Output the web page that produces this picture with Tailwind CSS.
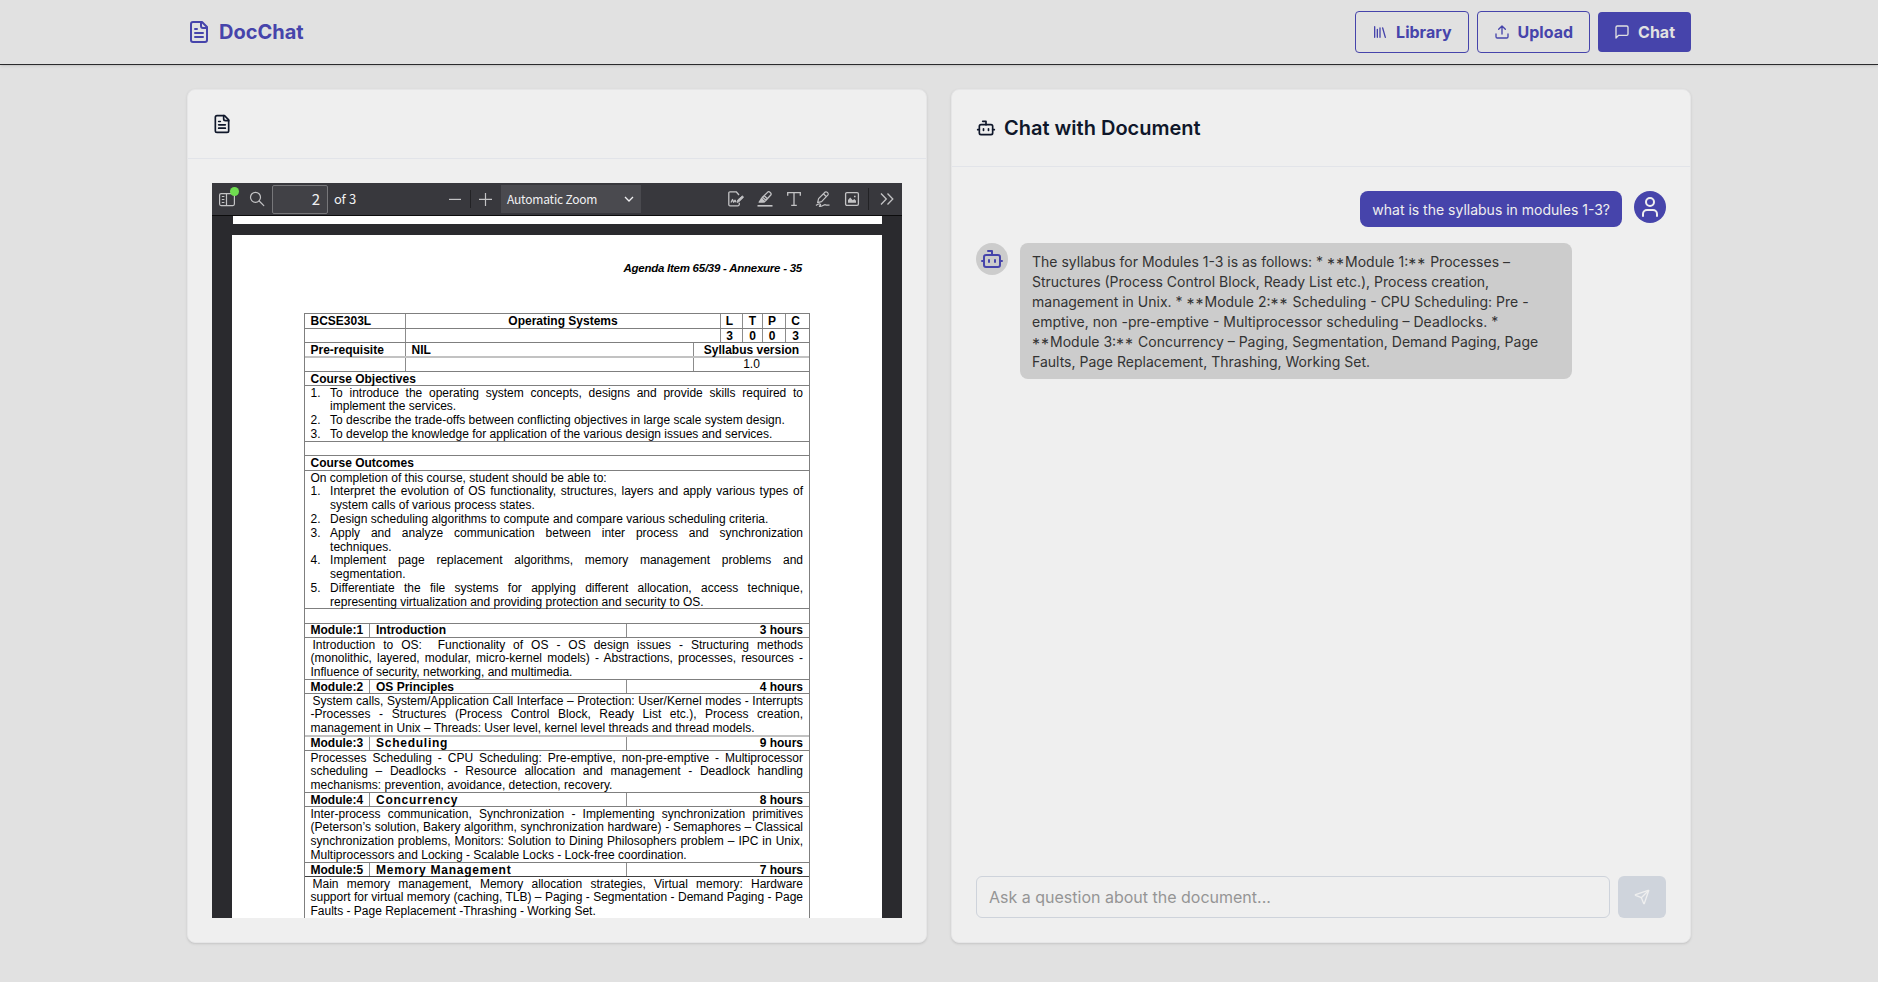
<!DOCTYPE html>
<html lang="en">
<head>
<meta charset="utf-8">
<title>DocChat</title>
<script src="https://cdn.jsdelivr.net/npm/@tailwindcss/browser@4"></script>
</head>
<body class="h-[982px] overflow-hidden bg-[#e1e1e1] font-['Inter',sans-serif] text-[#0f172a]">
<svg class="hidden">
  <symbol id="file" viewBox="0 0 24 24"><path d="M15 2H6a2 2 0 0 0-2 2v16a2 2 0 0 0 2 2h12a2 2 0 0 0 2-2V7Z"/><path d="M14 2v4a2 2 0 0 0 2 2h4"/><path d="M10 9H8M16 13H8M16 17H8"/></symbol>
  <symbol id="bot" viewBox="0 0 24 24"><path d="M12 8V4H8"/><rect width="16" height="12" x="4" y="8" rx="2"/><path d="M2 14h2M20 14h2M15 13v2M9 13v2"/></symbol>
</svg>

<header class="h-[65px] border-b border-[#2a2a2c] shadow-sm">
  <div class="mx-auto flex h-16 w-[1504px] items-center justify-between">
    <div class="flex items-center gap-2 text-[#4644ab]">
      <svg class="size-6 fill-none stroke-current stroke-2 [stroke-linecap:round] [stroke-linejoin:round]"><use href="#file"/></svg>
      <span class="text-xl font-bold">DocChat</span>
    </div>
    <nav class="flex items-center gap-2 font-bold">
      <button class="flex h-[42px] items-center gap-2 rounded border border-[#4644ab] px-4 text-[#4644ab]">
        <svg class="size-4 fill-none stroke-current stroke-2 [stroke-linecap:round] [stroke-linejoin:round]" viewBox="0 0 24 24"><path d="m16 6 4 14M12 6v14M8 8v12M4 4v16"/></svg>Library</button>
      <button class="flex h-[42px] items-center gap-2 rounded border border-[#4644ab] px-4 text-[#4644ab]">
        <svg class="size-4 fill-none stroke-current stroke-2 [stroke-linecap:round] [stroke-linejoin:round]" viewBox="0 0 24 24"><path d="M21 15v4a2 2 0 0 1-2 2H5a2 2 0 0 1-2-2v-4M17 8l-5-5-5 5M12 3v12"/></svg>Upload</button>
      <button class="flex h-10 items-center gap-2 rounded bg-[#4644ab] px-4 text-[#e1e1e1]">
        <svg class="size-4 fill-none stroke-current stroke-2 [stroke-linecap:round] [stroke-linejoin:round]" viewBox="0 0 24 24"><path d="M21 15a2 2 0 0 1-2 2H7l-4 4V5a2 2 0 0 1 2-2h14a2 2 0 0 1 2 2z"/></svg>Chat</button>
    </nav>
  </div>
</header>

<main class="mx-auto mt-6 grid h-[854px] w-[1504px] grid-cols-2 gap-6">
  <section class="flex flex-col rounded-lg border border-[#e6e6e7] bg-[#efefef] shadow-sm">
    <div class="border-b border-[#e2e4e9] p-6">
      <svg class="block size-5 fill-none stroke-current stroke-2 [stroke-linecap:round] [stroke-linejoin:round]"><use href="#file"/></svg>
    </div>
    <div class="m-6 flex h-[735px] flex-col overflow-hidden bg-[#2a2a2e]">
      <!-- viewer toolbar -->
      <div class="flex h-[33px] shrink-0 items-center border-b border-[#0c0c0d] bg-[#38383d] font-['Noto_Sans_CJK_SC',sans-serif] text-[13px] text-[#f0f0f2]">
        <div class="relative ml-[7px] h-8 w-4 shrink-0">
          <svg class="mt-2 block size-4 fill-none stroke-[#c3c3c5] stroke-[1.2]" viewBox="0 0 16 16"><rect x=".6" y="2.6" width="14.8" height="12" rx="1.5"/><path d="M7.5 2.6v12M2.8 5.5h2.6M2.8 8.5h2.6M2.8 11.5h2.6"/></svg>
          <span class="absolute top-1 left-[11px] size-[9px] rounded-full bg-[#6fdc50]"></span>
        </div>
        <svg class="ml-[14px] size-4 shrink-0 fill-none stroke-[#c3c3c5] stroke-[1.2] [stroke-linecap:round]" viewBox="0 0 16 16"><circle cx="6.5" cy="6.3" r="5"/><path d="m10.2 10 4.6 4.6"/></svg>
        <div class="ml-[7px] flex h-[29px] w-14 shrink-0 items-center justify-end rounded-[2px] border border-[#77777a] bg-[#414146] pr-[7px] text-[15px]">2</div>
        <span class="ml-[6px] w-[115px] shrink-0 tracking-[-0.3px] [word-spacing:0.8px]">of 3</span>
        <svg class="h-4 w-3 shrink-0 stroke-[#c3c3c5] stroke-[1.2]" viewBox="0 0 12 16"><path d="M0 8.4h12"/></svg>
        <span class="ml-[9px] h-[18px] w-px shrink-0 bg-[#222225]"></span>
        <svg class="ml-2 h-4 w-[13px] shrink-0 stroke-[#c3c3c5] stroke-[1.2]" viewBox="0 0 13 16"><path d="M0 8.4h13M6.5 2v13"/></svg>
        <div class="ml-[9px] flex h-7 w-[140px] shrink-0 items-center justify-between bg-[#4a4a4f] pr-[7px] pl-[6px] text-[12px] tracking-[-0.2px]"><span>Automatic Zoom</span>
          <svg class="h-2 w-2.5 fill-none stroke-[#f0f0f2] stroke-[1.3]" viewBox="0 0 10 8"><path d="m1 2 4 4 4-4"/></svg>
        </div>
        <div class="ml-[87px] flex shrink-0 items-center gap-[13px]">
          <svg class="size-4 fill-none stroke-[#c3c3c5] stroke-[1.3] [stroke-linejoin:round]" viewBox="0 0 16 16"><path d="M11 4 8.2.8H2A1.2 1.2 0 0 0 .8 2v11.5A1.2 1.2 0 0 0 2 14.8h8a1.5 1.5 0 0 0 1.3-1.3v-1.8M3 11.5l1.5-3 1.2 2.7 1.4-2 .8 2"/><path class="fill-[#c3c3c5] stroke-[.8]" d="m9 11.5.6-2.4 4.8-4.3 1.2 1.5-4.7 4.5z"/></svg>
          <svg class="size-4 fill-none stroke-[#c3c3c5] stroke-[1.3] [stroke-linejoin:round]" viewBox="0 0 16 16"><path d="M5.5 6.2 11 .9c1.2-.8 3.7 1.2 3 2.8L9 9.3zM5.5 6.2 4.4 7.8l3 3L9 9.3M7.3 4.7l3.1 3"/><path class="fill-[#c3c3c5]" d="m4.4 7.8-2.2 3.3h4L7.4 10.4z"/><path class="stroke-[1.6]" d="M.5 14.8h15"/></svg>
          <svg class="size-4 fill-none stroke-[#c3c3c5] stroke-[1.3]" viewBox="0 0 16 16"><path d="M1.7 4.8V1.6h12.6v3.2M8 1.6v12.8M5.2 14.4h5.6"/></svg>
          <svg class="size-4 fill-none stroke-[#c3c3c5] stroke-[1.2] [stroke-linejoin:round]" viewBox="0 0 16 16"><path d="m3.6 7.7 6.6-6.7c1.3-.8 3.6 1 2.8 2.8L6.6 10.6l-4 1zM8.4 2.8l3 2.9"/><path d="M1 14.5c2-2 4-1.7 4.5-1s-1.8 1.7-.8 1.9c2 .2 4-1.7 5.5-1.7 1 .5 2.4.7 4.4.3"/></svg>
          <svg class="size-4 fill-none stroke-[#c3c3c5] stroke-[1.3]" viewBox="0 0 16 16"><rect x="1.6" y="1.6" width="12.8" height="12.8" rx="1.3"/><path class="fill-[#c3c3c5] stroke-none" d="M4 11.8V9l2.2-2.5 2.5 2.7L10.3 8 12 9.8v2zM10 4.7h1.6v1.6H10z"/></svg>
        </div>
        <span class="ml-[8px] h-[22px] w-px shrink-0 bg-[#222225]"></span>
        <svg class="ml-[11px] h-3 w-[14px] shrink-0 fill-none stroke-[#c3c3c5] stroke-[1.3]" viewBox="0 0 14 12"><path d="m1 .5 5.3 5.5L1 11.5M7.5.5 12.8 6l-5.3 5.5"/></svg>
      </div>
      <div class="ml-[21px] h-2 w-[649px] shrink-0 bg-white"></div>
      <!-- document page -->
      <div class="mt-[11px] ml-5 h-[683px] w-[650px] shrink-0 overflow-hidden bg-white font-['Liberation_Sans',Arial,sans-serif] text-[12px] leading-[13.8px] whitespace-nowrap text-black">
        <p class="mt-[27px] mr-[80px] text-right text-[11.5px] font-bold tracking-[-0.25px] italic">Agenda Item 65/39 - Annexure - 35</p>
        <div class="mt-[37px] ml-[72px] w-[506px] border-x border-[#7f7f7f] [&>div]:border-t [&>div]:border-[#7f7f7f]">
          <div class="flex h-[15px] leading-[15px] font-bold [&>*+*]:border-l [&>*+*]:border-[#8c8c8c]"><span class="w-[100px] pl-[5.5px]">BCSE303L</span><span class="w-[315px] text-center">Operating Systems</span><span class="w-[22px] pr-1 text-center">L</span><span class="w-5 text-center">T</span><span class="w-[23px] pr-1 text-center">P</span><span class="flex-1 pr-1 text-center">C</span></div>
          <div class="flex h-[14px] leading-[15px] font-bold [&>*+*]:border-l [&>*+*]:border-[#8c8c8c]"><span class="w-[100px]"></span><span class="w-[315px]"></span><span class="w-[22px] pr-1 text-center">3</span><span class="w-5 text-center">0</span><span class="w-[23px] pr-1 text-center">0</span><span class="flex-1 pr-1 text-center">3</span></div>
          <div class="flex h-[14px] leading-[15px] font-bold [&>*+*]:border-l [&>*+*]:border-[#8c8c8c]"><span class="w-[100px] pl-[5.5px]">Pre-requisite</span><span class="w-[288px] pl-[5.5px]">NIL</span><span class="flex-1 text-center">Syllabus version</span></div>
          <div class="flex h-[15px] !border-t-2 !border-[#c2c2c2] leading-[12.6px] [&>*+*]:border-l [&>*+*]:border-[#8c8c8c]"><span class="w-[100px]"></span><span class="w-[288px]"></span><span class="flex-1 text-center">1.0</span></div>
          <div class="h-[14px] pl-[5.5px] leading-[15px] font-bold">Course Objectives</div>
          <div class="h-[56px] pt-[0.9px] pr-[6px] pl-[5.5px] [&>p]:flex [&>p>b]:w-[19.6px] [&>p>b]:font-normal [&>p>span]:flex-1">
            <p><b>1.</b><span class="[text-align-last:justify]">To introduce the operating system concepts, designs and provide skills required to</span></p>
            <p><b></b><span>implement the services.</span></p>
            <p><b>2.</b><span>To describe the trade-offs between conflicting objectives in large scale system design.</span></p>
            <p><b>3.</b><span>To develop the knowledge for application of the various design issues and services.</span></p>
          </div>
          <div class="h-[14px]"></div>
          <div class="h-[15px] pl-[5.5px] leading-[15px] font-bold">Course Outcomes</div>
          <div class="h-[138px] pt-[0.9px] pr-[6px] pl-[5.5px] [&>p]:flex [&>p>b]:w-[19.6px] [&>p>b]:font-normal [&>p>span]:flex-1">
            <p>On completion of this course, student should be able to:</p>
            <p><b>1.</b><span class="[text-align-last:justify]">Interpret the evolution of OS functionality, structures, layers and apply various types of</span></p>
            <p><b></b><span>system calls of various process states.</span></p>
            <p><b>2.</b><span>Design scheduling algorithms to compute and compare various scheduling criteria.</span></p>
            <p><b>3.</b><span class="[text-align-last:justify]">Apply and analyze communication between inter process and synchronization</span></p>
            <p><b></b><span>techniques.</span></p>
            <p><b>4.</b><span class="[text-align-last:justify]">Implement page replacement algorithms, memory management problems and</span></p>
            <p><b></b><span>segmentation.</span></p>
            <p><b>5.</b><span class="[text-align-last:justify]">Differentiate the file systems for applying different allocation, access technique,</span></p>
            <p><b></b><span>representing virtualization and providing protection and security to OS.</span></p>
          </div>
          <div class="h-[15px]"></div>
          <div class="flex h-[14px] leading-[12.6px] font-bold [&>*+*]:border-l [&>*+*]:border-[#8c8c8c]"><span class="w-[64px] pl-[5.5px]">Module:1</span><span class="w-[257px] pl-[6px]">Introduction</span><span class="flex-1 pr-[6px] text-right">3 hours</span></div>
          <div class="h-[42px] pt-[0.9px] pr-[6px] pl-[5.5px]">
            <p class="pl-[2px] [text-align-last:justify]">Introduction to OS: &nbsp;Functionality of OS - OS design issues - Structuring methods</p>
            <p class="[text-align-last:justify]">(monolithic, layered, modular, micro-kernel models) - Abstractions, processes, resources -</p>
            <p>Influence of security, networking, and multimedia.</p>
          </div>
          <div class="flex h-[14px] leading-[15px] font-bold [&>*+*]:border-l [&>*+*]:border-[#8c8c8c]"><span class="w-[64px] pl-[5.5px]">Module:2</span><span class="w-[257px] pl-[6px]">OS Principles</span><span class="flex-1 pr-[6px] text-right">4 hours</span></div>
          <div class="h-[42px] pt-[0.9px] pr-[6px] pl-[5.5px]">
            <p class="pl-[2px] [text-align-last:justify]">System calls, System/Application Call Interface – Protection: User/Kernel modes - Interrupts</p>
            <p class="[text-align-last:justify]">-Processes - Structures (Process Control Block, Ready List etc.), Process creation,</p>
            <p>management in Unix – Threads: User level, kernel level threads and thread models.</p>
          </div>
          <div class="flex h-[15px] !border-t-2 !border-[#c2c2c2] leading-[12.6px] font-bold [&>*+*]:border-l [&>*+*]:border-[#8c8c8c]"><span class="w-[64px] pl-[5.5px]">Module:3</span><span class="w-[257px] pl-[6px] tracking-[0.75px]">Scheduling</span><span class="flex-1 pr-[6px] text-right">9 hours</span></div>
          <div class="h-[42px] pt-[0.9px] pr-[6px] pl-[5.5px]">
            <p class="[text-align-last:justify]">Processes Scheduling - CPU Scheduling: Pre-emptive, non-pre-emptive - Multiprocessor</p>
            <p class="[text-align-last:justify]">scheduling – Deadlocks - Resource allocation and management - Deadlock handling</p>
            <p>mechanisms: prevention, avoidance, detection, recovery.</p>
          </div>
          <div class="flex h-[14px] leading-[15px] font-bold [&>*+*]:border-l [&>*+*]:border-[#8c8c8c]"><span class="w-[64px] pl-[5.5px]">Module:4</span><span class="w-[257px] pl-[6px] tracking-[0.75px]">Concurrency</span><span class="flex-1 pr-[6px] text-right">8 hours</span></div>
          <div class="h-[56px] pt-[0.9px] pr-[6px] pl-[5.5px]">
            <p class="[text-align-last:justify]">Inter-process communication, Synchronization - Implementing synchronization primitives</p>
            <p class="[text-align-last:justify]">(Peterson’s solution, Bakery algorithm, synchronization hardware) - Semaphores – Classical</p>
            <p class="[text-align-last:justify]">synchronization problems, Monitors: Solution to Dining Philosophers problem – IPC in Unix,</p>
            <p>Multiprocessors and Locking - Scalable Locks - Lock-free coordination.</p>
          </div>
          <div class="flex h-[14px] leading-[15px] font-bold [&>*+*]:border-l [&>*+*]:border-[#8c8c8c]"><span class="w-[64px] pl-[5.5px]">Module:5</span><span class="w-[257px] pl-[6px] tracking-[0.75px]">Memory Management</span><span class="flex-1 pr-[6px] text-right">7 hours</span></div>
          <div class="h-[60px] !border-[#404040] pt-[0.9px] pr-[6px] pl-[5.5px]">
            <p class="pl-[2px] [text-align-last:justify]">Main memory management, Memory allocation strategies, Virtual memory: Hardware</p>
            <p class="[text-align-last:justify]">support for virtual memory (caching, TLB) – Paging - Segmentation - Demand Paging - Page</p>
            <p>Faults - Page Replacement -Thrashing - Working Set.</p>
          </div>
        </div>
      </div>
    </div>
  </section>

  <section class="flex flex-col rounded-lg border border-[#e6e6e7] bg-[#efefef] shadow-sm">
    <div class="flex items-center gap-2 border-b border-[#e2e4e9] p-6">
      <svg class="size-5 fill-none stroke-current stroke-2 [stroke-linecap:round] [stroke-linejoin:round]"><use href="#bot"/></svg>
      <h2 class="text-xl font-semibold">Chat with Document</h2>
    </div>
    <div class="flex flex-1 flex-col gap-4 p-6 text-sm">
      <div class="flex items-start justify-end gap-3">
        <div class="rounded-lg bg-[#4644ab] px-3 pt-[9px] pb-[7px] text-[#efefef]">what is the syllabus in modules 1-3?</div>
        <div class="flex size-8 items-center justify-center rounded-full bg-[#4644ab] text-[#efefef]">
          <svg class="size-6 fill-none stroke-current stroke-2 [stroke-linecap:round] [stroke-linejoin:round]" viewBox="0 0 24 24"><path d="M19 21v-2a4 4 0 0 0-4-4H9a4 4 0 0 0-4 4v2"/><circle cx="12" cy="7" r="4"/></svg>
        </div>
      </div>
      <div class="flex items-start gap-3">
        <div class="flex size-8 items-center justify-center rounded-full bg-[#cccccc] text-[#4644ab]">
          <svg class="size-6 fill-none stroke-current stroke-2 [stroke-linecap:round] [stroke-linejoin:round]"><use href="#bot"/></svg>
        </div>
        <div class="w-[552px] rounded-lg bg-[#cccccc] px-3 pt-[9px] pb-[7px] whitespace-nowrap text-[#333333] [&>i]:relative [&>i]:top-[3px] [&>i]:text-[16px] [&>i]:leading-none [&>i]:tracking-[1px] [&>i]:not-italic">The syllabus for Modules 1-3 is as follows: * <i>**</i>Module 1:<i>**</i> Processes –<br>Structures (Process Control Block, Ready List etc.), Process creation,<br>management in Unix. * <i>**</i>Module 2:<i>**</i> Scheduling - CPU Scheduling: Pre -<br>emptive, non -pre-emptive - Multiprocessor scheduling – Deadlocks. *<br><i>**</i>Module 3:<i>**</i> Concurrency – Paging, Segmentation, Demand Paging, Page<br>Faults, Page Replacement, Thrashing, Working Set.</div>
      </div>
    </div>
    <div class="flex gap-2 px-6 pb-6">
      <input class="h-[42px] flex-1 rounded-md border border-[#ced3db] px-3 text-base placeholder:text-[#959595]" placeholder="Ask a question about the document...">
      <button class="flex h-[42px] w-12 items-center justify-center rounded-md bg-[#cfd4dc] text-[#efefef]">
        <svg class="size-4 fill-none stroke-current stroke-2 [stroke-linecap:round] [stroke-linejoin:round]" viewBox="0 0 24 24"><path d="M14.536 21.686a.5.5 0 0 0 .937-.024l6.5-19a.496.496 0 0 0-.635-.635l-19 6.5a.5.5 0 0 0-.024.937l7.93 3.18a2 2 0 0 1 1.112 1.11z"/><path d="m21.854 2.147-10.94 10.939"/></svg>
      </button>
    </div>
  </section>
</main>
</body>
</html>
